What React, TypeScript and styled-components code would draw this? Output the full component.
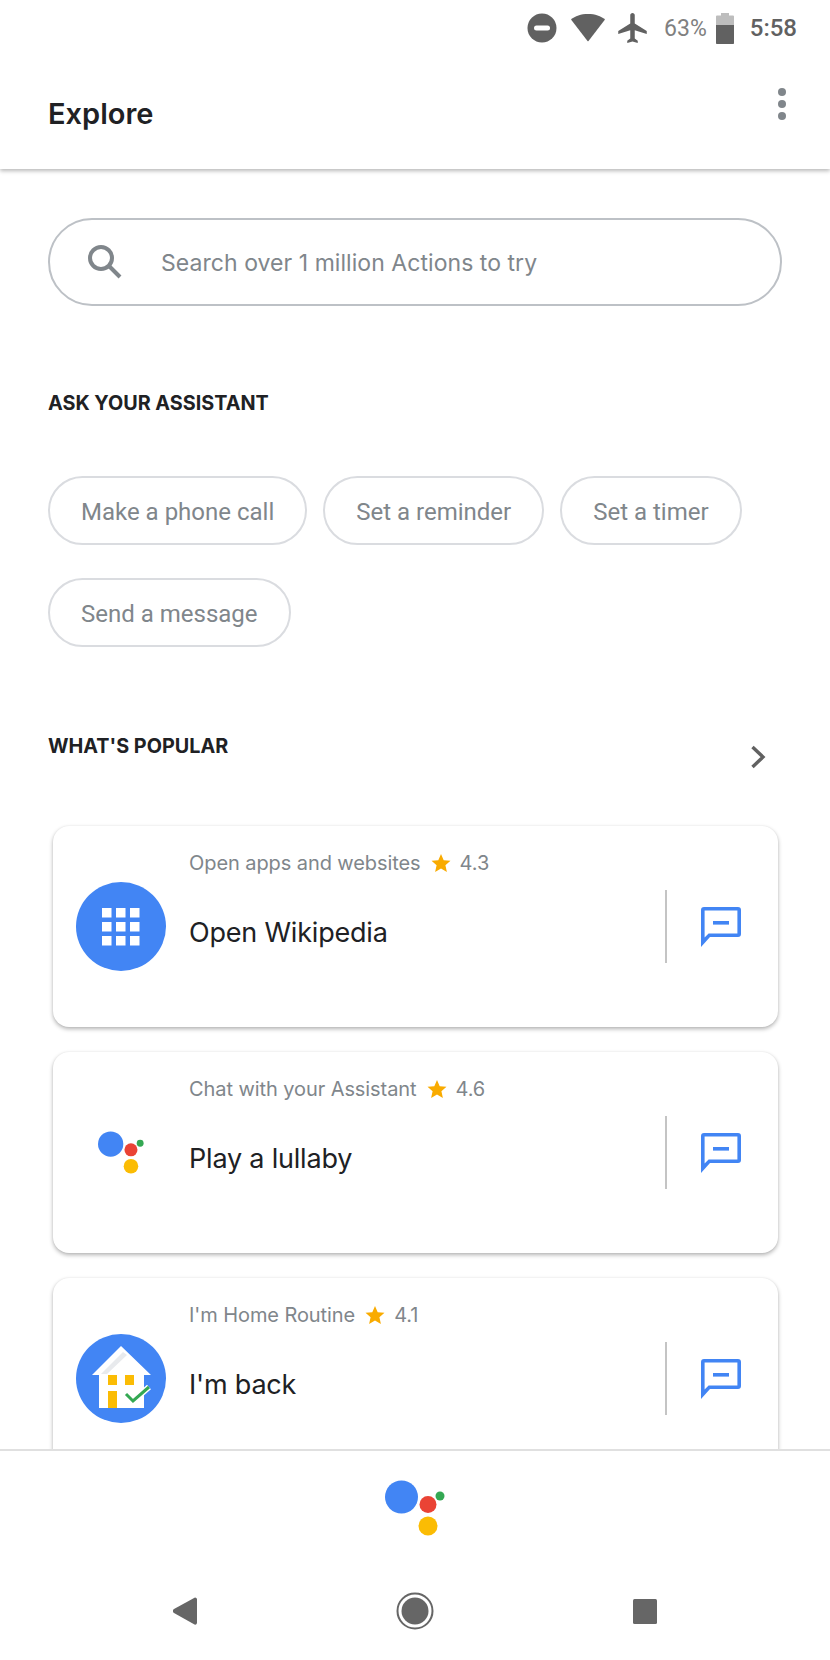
import styled, { createGlobalStyle } from "styled-components"

const GlobalStyle = createGlobalStyle`
  html, body { margin: 0; padding: 0; background: #fff; }
  * { box-sizing: border-box; }
`

const Screen = styled.div`
  width: 830px;
  height: 1660px;
  display: flex;
  flex-direction: column;
  overflow: hidden;
  background: #fff;
  font-family: "Roboto", sans-serif;
`

const StatusBar = styled.div`
  height: 60px;
  flex: none;
  display: flex;
  align-items: center;
  justify-content: flex-end;
  padding: 0 33px 4px 0;
  color: #616161;
`

const StatusIcon = styled.svg<{ $gap: number }>`
  display: block;
  margin-right: ${(p) => p.$gap}px;
`

const Battery = styled.span`
  font-size: 23px;
  color: #808080;
  margin-right: 9px;
`

const Clock = styled.span`
  font-size: 24px;
  font-weight: 500;
  color: #616161;
`

const Header = styled.header`
  height: 109px;
  flex: none;
  display: flex;
  align-items: center;
  justify-content: space-between;
  padding: 0 44px 2px 48px;
  background: #fff;
  box-shadow: 0 2px 4px rgba(0, 0, 0, 0.28);
  clip-path: inset(0 0 -10px 0);
  position: relative;
  z-index: 1;
`

const Title = styled.h1`
  margin: 0;
  font-family: "Inter", sans-serif;
  font-size: 29px;
  font-weight: 600;
  color: #202124;
`

const MoreDots = styled.div`
  display: flex;
  flex-direction: column;
  gap: 4px;
  margin-top: -20px;
`

const Dot = styled.span`
  width: 8px;
  height: 8px;
  border-radius: 50%;
  background: #80868b;
`

const Content = styled.main`
  flex: 1;
  min-height: 0;
  overflow: hidden;
  padding: 49px 48px 0;
`

const SearchBox = styled.div`
  height: 88px;
  border: 2px solid #bdc1c6;
  border-radius: 44px;
  display: flex;
  align-items: center;
  padding-left: 37px;
  gap: 38px;
`

const SearchText = styled.span`
  padding-top: 2px;
  font-family: "Inter", sans-serif;
  font-size: 23px;
  letter-spacing: 0.05px;
  color: #80868b;
`

const SectionTitle = styled.h2`
  margin: 0;
  font-family: "Inter", sans-serif;
  font-size: 19.8px;
  font-weight: 700;
  line-height: 24px;
  color: #202124;
`

const AskTitle = styled(SectionTitle)`
  margin-top: 85px;
`

const Chips = styled.div`
  display: flex;
  flex-wrap: wrap;
  gap: 33px 16px;
  margin-top: 61px;
  width: 720px;
`

const Chip = styled.div`
  height: 69px;
  padding: 2px 31px 0;
  display: flex;
  align-items: center;
  border: 2px solid #dadce0;
  border-radius: 35px;
  font-size: 24px;
  color: #80868b;
`

const PopularRow = styled.div`
  display: flex;
  justify-content: space-between;
  align-items: flex-start;
  margin-top: 87px;
  padding-right: 16px;
`

const Chevron = styled.svg`
  display: block;
  margin-top: 11px;
`

const Cards = styled.div`
  display: flex;
  flex-direction: column;
  gap: 25px;
  margin: 57px 4px 0 5px;
`

const Card = styled.article`
  flex: none;
  height: 201px;
  padding: 0 37px 0 23px;
  display: flex;
  background: #fff;
  border-radius: 16px;
  box-shadow: 0 2px 4px rgba(0, 0, 0, 0.3), 0 0 2px rgba(0, 0, 0, 0.06);
`

const Thumb = styled.div`
  width: 90px;
  height: 89px;
  flex: none;
  margin-top: 56px;
  display: flex;
  align-items: center;
  justify-content: center;
`

const BlueThumb = styled(Thumb)`
  border-radius: 50%;
  background: #4285f4;
`

const CardBody = styled.div`
  flex: 1;
  min-width: 0;
  padding: 24px 0 0 23px;
`

const Meta = styled.div`
  display: flex;
  align-items: center;
  height: 26px;
  font-family: "Inter", sans-serif;
  font-size: 20px;
  letter-spacing: -0.08px;
  color: #80868b;
`

const Star = styled.svg`
  display: block;
  margin: 0 9px 0 10px;
`

const CardTitle = styled.div`
  margin-top: 39px;
  font-family: "Inter", sans-serif;
  font-size: 27px;
  letter-spacing: -0.2px;
  line-height: 36px;
  color: #202124;
`

const Divider = styled.div`
  width: 2px;
  height: 73px;
  margin-top: 64px;
  flex: none;
  background: #c4c4c4;
`

const ChatIcon = styled.svg`
  display: block;
  flex: none;
  margin: 81px 0 0 34px;
`

const BottomPanel = styled.footer`
  height: 211px;
  flex: none;
  border-top: 2px solid #e0e0e0;
  background: #fff;
  display: flex;
  flex-direction: column;
  align-items: center;
  padding-top: 29px;
  position: relative;
  z-index: 1;
`

const NavBar = styled.nav`
  display: flex;
  align-items: center;
  justify-content: space-between;
  width: 484px;
  margin-top: 55px;
`

const SearchGlyph = () => (
  <svg width="36" height="36" viewBox="0 0 36 36" fill="none">
    <circle cx="14" cy="14" r="11" stroke="#80868b" strokeWidth="4" />
    <path d="M22 22 L33 33" stroke="#80868b" strokeWidth="4" />
  </svg>
)

const Logo = ({ size }: { size: number }) => (
  <svg width={size} height={size * 0.95} viewBox="0 0 60 57">
    <circle cx="16.5" cy="17" r="16.5" fill="#4285f4" />
    <circle cx="43" cy="24.5" r="8.5" fill="#ea4335" />
    <circle cx="43" cy="46" r="9.5" fill="#fbbc04" />
    <circle cx="55" cy="16" r="4.5" fill="#34a853" />
  </svg>
)

const Rating = ({ value }: { value: string }) => (
  <>
    <Star width="20" height="20" viewBox="0 0 20 20">
      <path d="M10 1l2.7 6.2 6.8.6-5.1 4.5 1.5 6.6L10 15.4l-5.9 3.5 1.5-6.6L.5 7.8l6.8-.6z" fill="#f9ab00" />
    </Star>
    <span>{value}</span>
  </>
)

const Chat = () => (
  <ChatIcon width="40" height="40" viewBox="0 0 40 40">
    <path
      fillRule="evenodd"
      d="M3 0 H37 a3 3 0 0 1 3 3 V27 a3 3 0 0 1 -3 3 H9 L0 40 V3 a3 3 0 0 1 3 -3 z M3.6 3.6 V30.6 L7.6 26.4 H36.4 V3.6 z"
      fill="#4285f4"
    />
    <rect x="12" y="14" width="16" height="3.6" fill="#4285f4" />
  </ChatIcon>
)

const AppGrid = () => (
  <svg width="38" height="38" viewBox="0 0 38 38" fill="#fff">
    {[0, 14, 28].map((y) =>
      [0, 14, 28].map((x) => <rect key={`${x}-${y}`} x={x} y={y} width="9.5" height="9.5" />)
    )}
  </svg>
)

const HouseIcon = () => (
  <svg width="60" height="66" viewBox="0 0 60 66">
    <path d="M30 0 L60 29 H53 V62 H8 V29 H1 z" fill="#fff" />
    <path d="M32 6 L36 9 L16 28 L10 28 z" fill="#e8eaed" />
    <rect x="17" y="29" width="9" height="10" fill="#fbbc04" />
    <rect x="34" y="29" width="9" height="10" fill="#fbbc04" />
    <rect x="17" y="45" width="9" height="17" fill="#fbbc04" />
    <path d="M35 48 L42 55 L58 41" fill="none" stroke="#fff" strokeWidth="6" />
    <path d="M35 48 L42 55 L58 41" fill="none" stroke="#34a853" strokeWidth="3" />
  </svg>
)

const cards = [
  { id: "wiki", meta: "Open apps and websites", rating: "4.3", title: "Open Wikipedia" },
  { id: "lullaby", meta: "Chat with your Assistant", rating: "4.6", title: "Play a lullaby" },
  { id: "home", meta: "I'm Home Routine", rating: "4.1", title: "I'm back" },
]

const chips = ["Make a phone call", "Set a reminder", "Set a timer", "Send a message"]

export default function App() {
  return (
    <Screen>
      <GlobalStyle />
      <StatusBar>
        <StatusIcon $gap={13} width="30" height="30" viewBox="0 0 30 30">
          <circle cx="15" cy="15" r="14.5" fill="#616161" />
          <rect x="7" y="12.5" width="16" height="5" rx="2.5" fill="#fff" />
        </StatusIcon>
        <StatusIcon $gap={12} width="36" height="30" viewBox="0 0 36 30">
          <path d="M18 1 C25 1 31 3 35 6.5 L18.5 28 Q18 28.5 17.5 28 L1 6.5 C5 3 11 1 18 1 z" fill="#616161" />
        </StatusIcon>
        <StatusIcon $gap={17} width="29" height="30" viewBox="2 2 19 20">
          <path d="M21 16v-2l-8-5V3.5c0-.83-.67-1.5-1.5-1.5S10 2.67 10 3.5V9l-8 5v2l8-2.5V19l-2 1.5V22l3.5-1 3.5 1v-1.5L13 19v-5.5l8 2.5z" fill="#616161" />
        </StatusIcon>
        <Battery>63%</Battery>
        <StatusIcon $gap={16} width="18" height="31" viewBox="0 0 18 31">
          <path d="M5 0 H13 V2.5 H17 a1 1 0 0 1 1 1 V30 a1 1 0 0 1 -1 1 H1 a1 1 0 0 1 -1 -1 V3.5 a1 1 0 0 1 1 -1 H5 z" fill="#bdbdbd" />
          <path d="M0 12 H18 V30 a1 1 0 0 1 -1 1 H1 a1 1 0 0 1 -1 -1 z" fill="#616161" />
        </StatusIcon>
        <Clock>5:58</Clock>
      </StatusBar>

      <Header>
        <Title>Explore</Title>
        <MoreDots>
          <Dot />
          <Dot />
          <Dot />
        </MoreDots>
      </Header>

      <Content>
        <SearchBox>
          <SearchGlyph />
          <SearchText>Search over 1 million Actions to try</SearchText>
        </SearchBox>

        <AskTitle>ASK YOUR ASSISTANT</AskTitle>
        <Chips>
          {chips.map((c) => (
            <Chip key={c}>{c}</Chip>
          ))}
        </Chips>

        <PopularRow>
          <SectionTitle>WHAT'S POPULAR</SectionTitle>
          <Chevron width="16" height="24" viewBox="0 0 16 24" fill="none">
            <path d="M2.5 2 L13 12 L2.5 22" stroke="#616161" strokeWidth="3.4" />
          </Chevron>
        </PopularRow>

        <Cards>
          {cards.map((c) => (
            <Card key={c.id}>
              {c.id === "wiki" && (
                <BlueThumb>
                  <AppGrid />
                </BlueThumb>
              )}
              {c.id === "lullaby" && (
                <Thumb>
                  <Logo size={46} />
                </Thumb>
              )}
              {c.id === "home" && (
                <BlueThumb>
                  <HouseIcon />
                </BlueThumb>
              )}
              <CardBody>
                <Meta>
                  {c.meta}
                  <Rating value={c.rating} />
                </Meta>
                <CardTitle>{c.title}</CardTitle>
              </CardBody>
              <Divider />
              <Chat />
            </Card>
          ))}
        </Cards>
      </Content>

      <BottomPanel>
        <Logo size={60} />
        <NavBar>
          <svg width="24" height="28" viewBox="0 0 24 28">
            <path d="M22 0.5 a2 2 0 0 1 2 1.5 V26 a2 2 0 0 1 -2.5 1.5 L1 16 a2.4 2.4 0 0 1 0 -4 z" fill="#666" />
          </svg>
          <svg width="38" height="38" viewBox="0 0 38 38">
            <circle cx="19" cy="19" r="17.5" fill="none" stroke="#666" strokeWidth="2" />
            <circle cx="19" cy="19" r="13.5" fill="#666" />
          </svg>
          <svg width="24" height="25" viewBox="0 0 24 25">
            <rect width="24" height="25" rx="1.5" fill="#666" />
          </svg>
        </NavBar>
      </BottomPanel>
    </Screen>
  )
}
